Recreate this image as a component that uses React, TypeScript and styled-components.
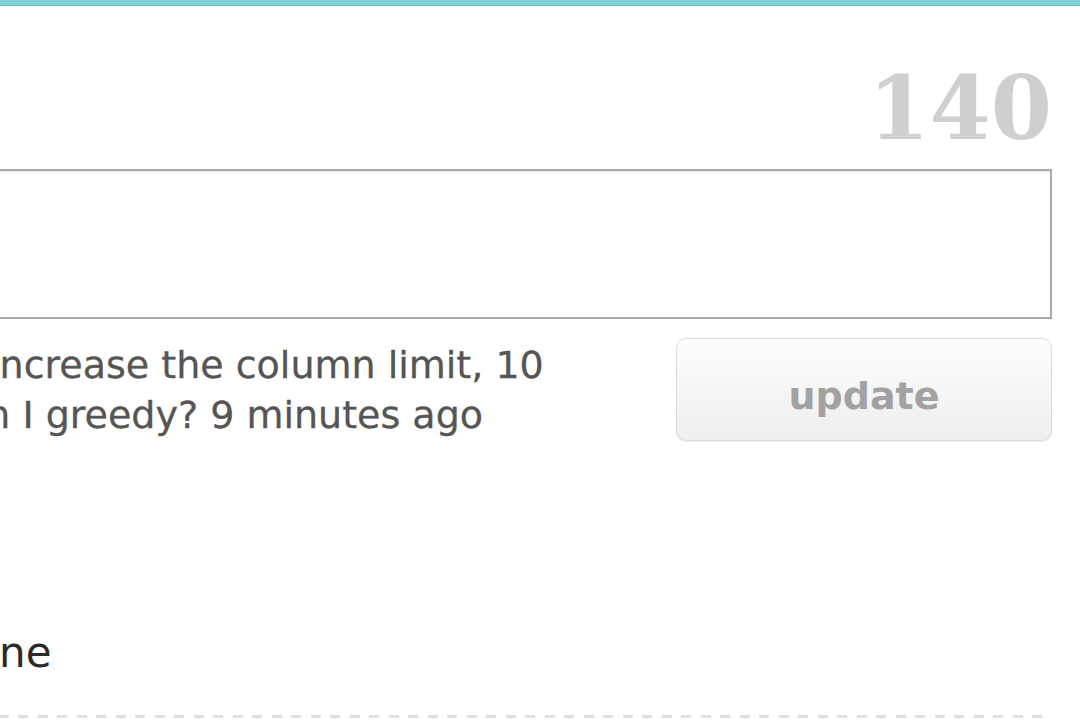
import React from 'react';
import styled, { createGlobalStyle } from 'styled-components';

const GlobalStyle = createGlobalStyle`
  html, body {
    margin: 0;
    padding: 0;
    background: #ffffff;
    overflow: hidden;
  }
`;

const Page = styled.div`
  width: 1080px;
  height: 720px;
  overflow: hidden;
  background: #ffffff;
  font-family: "DejaVu Sans", "Liberation Sans", sans-serif;
`;

const TopBar = styled.div`
  height: 5px;
  background: #7fd3d8;
  border-bottom: 1px solid #6dbfc3;
`;

const Content = styled.div`
  margin-left: -40px;
  padding-right: 28px;
  display: flex;
  flex-direction: column;
`;

const Counter = styled.div`
  margin-top: 60px;
  margin-bottom: 19px;
  text-align: right;
  font-family: "DejaVu Serif", "Liberation Serif", serif;
  font-weight: bold;
  font-size: 88px;
  line-height: 84px;
  color: #cfcfcf;
`;

const StatusBox = styled.textarea`
  display: block;
  box-sizing: border-box;
  width: 100%;
  height: 150px;
  margin: 0;
  resize: none;
  border: 2px solid #a9a9a9;
  box-shadow: inset 0 1px 2px #e2e2e2;
  background: #ffffff;
  outline: none;
`;

const UpdateRow = styled.div`
  display: flex;
  justify-content: space-between;
  align-items: flex-start;
  margin-top: 19px;
`;

const Latest = styled.div`
  margin-top: 2px;
  margin-left: 40px;
  font-size: 38px;
  line-height: 50px;
  color: #555555;
  white-space: nowrap;
  -webkit-text-stroke: 0.3px #555555;
`;

const Line = styled.div<{ $pull: number }>`
  margin-left: -${(p) => p.$pull}px;
`;

const UpdateButton = styled.button`
  flex: none;
  box-sizing: border-box;
  width: 376px;
  height: 103px;
  border: 1px solid #dcdcdc;
  border-radius: 10px;
  background: linear-gradient(#fdfdfd, #eeeeee);
  box-shadow: 0 1px 1px #ececec;
  color: #a2a2a2;
  font-family: "DejaVu Sans", "Liberation Sans", sans-serif;
  font-weight: bold;
  font-size: 38px;
  padding: 12px 0 0;
  cursor: pointer;
`;

const NavItem = styled.div<{ $pull: number }>`
  margin-top: 187px;
  margin-left: ${(p) => 40 - p.$pull}px;
  font-size: 42px;
  line-height: 50px;
  color: #2a2a2a;
  white-space: nowrap;
`;

const Divider = styled.div`
  margin-top: 37px;
  height: 3px;
  background: repeating-linear-gradient(
    to right,
    #dedede 0 10px,
    transparent 10px 19.5px
  );
`;

export default function App() {
  return (
    <Page>
      <GlobalStyle />
      <TopBar />
      <Content>
        <Counter>140</Counter>
        <StatusBox aria-label="What are you doing?" />
        <UpdateRow>
          <Latest>
            <Line $pull={11}>increase the column limit, 10</Line>
            <Line $pull={50}>am I greedy? 9 minutes ago</Line>
          </Latest>
          <UpdateButton>update</UpdateButton>
        </UpdateRow>
        <NavItem $pull={127}>Timeline</NavItem>
        <Divider />
      </Content>
    </Page>
  );
}
